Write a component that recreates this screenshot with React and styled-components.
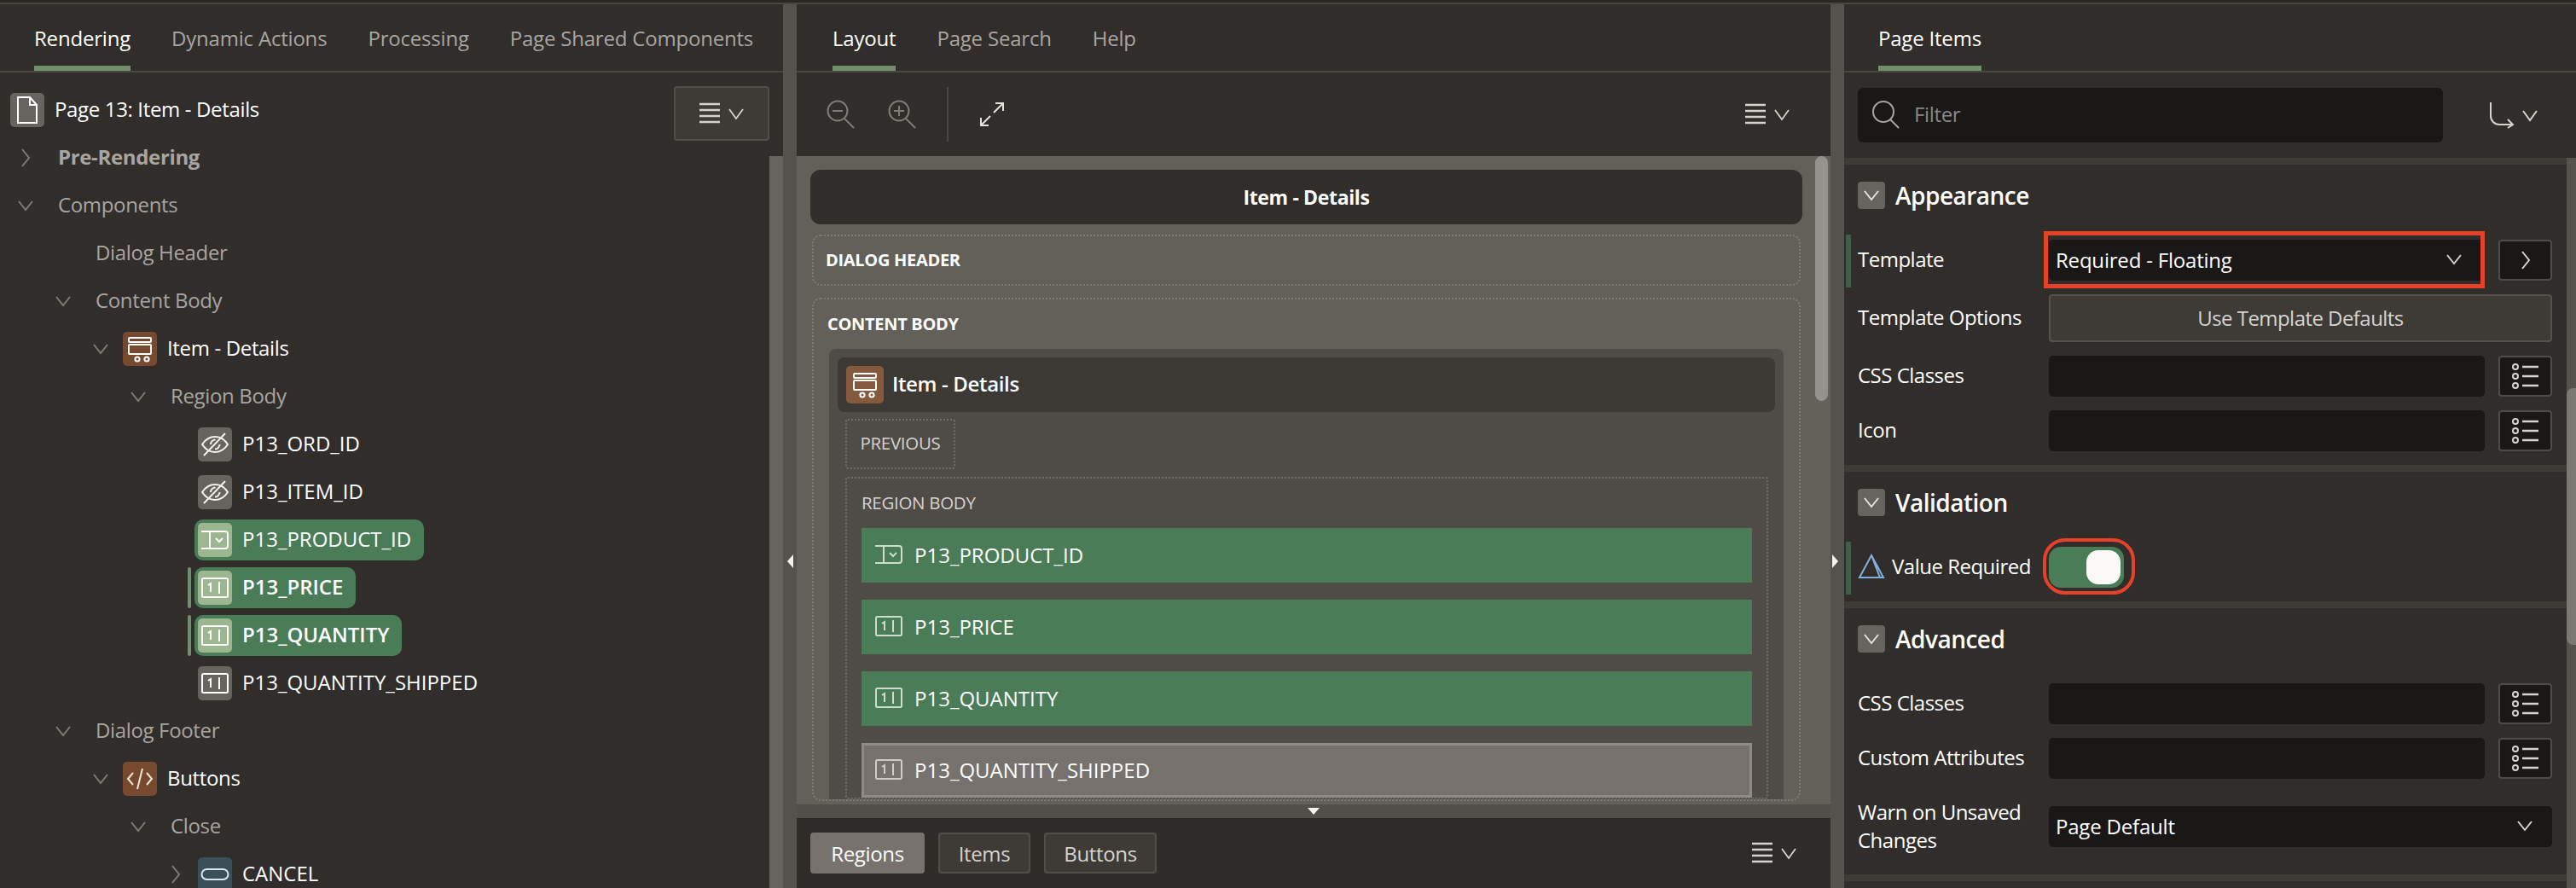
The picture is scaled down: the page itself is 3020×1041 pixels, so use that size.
import React from "react";
import styled, { createGlobalStyle } from "styled-components";

const GlobalStyle = createGlobalStyle`
  html, body { margin: 0; padding: 0; background: #312d2a; }
  * { box-sizing: border-box; }
  body { font-family: "Open Sans", "Noto Sans", sans-serif; font-size: 24px; letter-spacing: -0.35px; color: #fff; }
`;

const Shell = styled.div`
  width: 3020px;
  height: 1041px;
  overflow: hidden;
  display: grid;
  grid-template-columns: 918px 16px 1212px 16px 858px;
  padding-top: 2px;
  border-top: 3px solid #292623;
  background: #312d2a;
  position: relative;
  &::before {
    content: "";
    position: absolute;
    left: 0;
    right: 0;
    top: 0;
    height: 2px;
    background: #494641;
  }
`;
const Panel = styled.section`
  display: flex;
  flex-direction: column;
  min-width: 0;
  height: 1036px;
  overflow: hidden;
  position: relative;
  background: #312d2a;
`;
const Gutter = styled.div`
  background: #55514c;
  height: 1036px;
  position: relative;
`;
const GutterArrow = styled.span`
  position: absolute;
  top: 645px;
  ${(p) => (p.$dir === "left" ? "right: 4px;" : "left: 2px;")}
  width: 0;
  height: 0;
  border-top: 8px solid transparent;
  border-bottom: 8px solid transparent;
  ${(p) => (p.$dir === "left" ? "border-right: 7px solid #f4f2ef;" : "border-left: 7px solid #f4f2ef;")}
`;

const Tabs = styled.div`
  height: 80px;
  flex: none;
  display: flex;
  align-items: stretch;
  gap: ${(p) => p.$gap || 48}px;
  padding-left: ${(p) => p.$pad || 40}px;
  border-bottom: 2px solid #4a4743;
`;
const Tab = styled.div`
  height: 78px;
  padding-top: 22px;
  line-height: 36px;
  letter-spacing: -0.2px;
  color: ${(p) => (p.$active ? "#ffffff" : "#a8a5a0")};
  border-bottom: 6px solid ${(p) => (p.$active ? "#6f9068" : "transparent")};
  white-space: nowrap;
`;

/* left tree */
const TreeWrap = styled.div`
  flex: 1;
  display: flex;
  min-height: 0;
  position: relative;
`;
const Tree = styled.div`
  flex: 1;
  padding-top: 16px;
  overflow: hidden;
`;
const TreeScroll = styled.div`
  position: absolute;
  right: 0;
  top: 98px;
  bottom: 0;
  width: 16px;
  background: #67635e;
`;
const MenuBtn = styled.div`
  position: absolute;
  right: 16px;
  top: 16px;
  width: 112px;
  height: 64px;
  background: #3e3b37;
  border: 2px solid #514e49;
  border-radius: 4px;
  display: flex;
  align-items: center;
  justify-content: center;
`;
const Row = styled.div`
  height: 56px;
  display: flex;
  align-items: center;
  padding-left: ${(p) => 12 + p.$level * 44}px;
  white-space: nowrap;
`;
const ChevronSlot = styled.span`
  width: 36px;
  flex: none;
  display: flex;
  justify-content: center;
`;
const RowText = styled.span`
  font-weight: ${(p) => (p.$bold ? 700 : p.$semi ? 600 : 400)};
  color: ${(p) => (p.$dim ? "#a8a5a0" : "#ffffff")};
  margin-left: ${(p) => p.$ml || 0}px;
  padding-bottom: 3px;
  letter-spacing: ${(p) => (p.$caps ? 0 : "-0.35px")};
`;
const Chip = styled.div`
  display: flex;
  align-items: center;
  gap: 12px;
  height: 48px;
  padding: 4px ${(p) => (p.$selected ? 15 : 4)}px 4px 4px;
  margin-left: ${(p) => (p.$flush ? -4 : 4)}px;
  border-radius: 10px;
  background: ${(p) => (p.$selected ? "#4b7c58" : "transparent")};
  position: relative;
  ${(p) =>
    p.$changed &&
    `&::before {
      content: "";
      position: absolute;
      left: -8px;
      top: 0;
      bottom: 0;
      width: 4px;
      background: #6f9068;
      border-radius: 2px;
    }`}
`;
const Tile = styled.span`
  width: ${(p) => p.$w || 40}px;
  height: ${(p) => p.$w || 40}px;
  flex: none;
  border-radius: 5px;
  background: ${(p) => p.$bg};
  display: flex;
  align-items: center;
  justify-content: center;
`;

/* center */
const Toolbar = styled.div`
  height: 98px;
  flex: none;
  display: flex;
  align-items: center;
  padding: 0 46px 0 34px;
  gap: 36px;
`;
const Divider = styled.span`
  width: 2px;
  height: 64px;
  background: #4a4743;
  margin: 0 0 0 -2px;
`;
const Spacer = styled.span`
  flex: 1;
`;
const Canvas = styled.div`
  flex: 1;
  min-height: 0;
  overflow: hidden;
  position: relative;
  background: #635f59;
  padding: 16px 33px 0 16px;
`;
const CanvasScroll = styled.div`
  position: absolute;
  right: 3px;
  top: 0;
  width: 15px;
  height: 287px;
  background: #95918c;
  border-radius: 8px;
`;
const DialogBar = styled.div`
  height: 64px;
  border-radius: 12px;
  background: #312d2a;
  display: flex;
  align-items: center;
  justify-content: center;
  font-weight: 700;
  font-size: 23px;
`;
const Zone = styled.div`
  margin: ${(p) => p.$mt}px 2px 0;
  height: ${(p) => p.$h || "auto"};
  border: 2px dotted #7f7b75;
  border-radius: 10px;
  padding: ${(p) => (p.$h ? "0 16px" : "0 18px")};
  ${(p) => p.$h && "display: flex; align-items: center;"}
`;
const ZoneLabel = styled.div`
  font-size: 20px;
  font-weight: 700;
  line-height: 58px;
  letter-spacing: -0.3px;
  margin-left: -2px;
  white-space: nowrap;
`;
const Region = styled.div`
  background: #4f4b47;
  border-radius: 8px 8px 0 0;
  padding: 10px 10px 0;
`;
const RegionHead = styled.div`
  height: 64px;
  background: #3d3a36;
  border-radius: 8px;
  display: flex;
  align-items: center;
  gap: 10px;
  padding-left: 10px;
  font-weight: 600;
`;
const SmallBox = styled.div`
  margin: ${(p) => p.$mt}px 8px 0 9px;
  width: ${(p) => p.$w || "auto"};
  height: ${(p) => p.$h || "auto"};
  border: 2px dotted #6f6b66;
  border-radius: 3px;
  padding: ${(p) => p.$pad || 0};
`;
const SmallLabel = styled.div`
  font-size: 20.5px;
  color: #d6d3ce;
  line-height: ${(p) => p.$lh}px;
  padding-bottom: 2px;
  text-align: ${(p) => (p.$center ? "center" : "left")};
  white-space: nowrap;
  letter-spacing: -0.3px;
`;
const Slot = styled.div`
  height: 64px;
  margin-top: ${(p) => p.$mt}px;
  background: ${(p) => (p.$muted ? "#77726d" : "#4b7c58")};
  border: ${(p) => (p.$muted ? "3px solid #8f8b85" : "none")};
  padding: 0 0 2px ${(p) => (p.$muted ? 13 : 16)}px;
  display: flex;
  align-items: center;
  gap: 14px;
  letter-spacing: 0;
`;
const Resizer = styled.div`
  height: 16px;
  flex: none;
  background: #524e49;
  display: flex;
  align-items: center;
  justify-content: center;
`;
const DownArrow = styled.span`
  width: 0;
  height: 0;
  border-left: 7px solid transparent;
  border-right: 7px solid transparent;
  border-top: 8px solid #f4f2ef;
`;
const Footer = styled.div`
  height: 82px;
  flex: none;
  background: #2f2b28;
  display: flex;
  align-items: center;
  gap: 16px;
  padding: 0 38px 0 16px;
`;
const FooterBtn = styled.div`
  height: 48px;
  width: ${(p) => p.$w}px;
  border-radius: 4px;
  display: flex;
  align-items: center;
  justify-content: center;
  background: ${(p) => (p.$active ? "#77726d" : "#3e3b37")};
  border: 2px solid ${(p) => (p.$active ? "#77726d" : "#514e49")};
  color: ${(p) => (p.$active ? "#ffffff" : "#d6d3ce")};
`;

/* right */
const FilterBar = styled.div`
  height: 100px;
  flex: none;
  display: flex;
  align-items: center;
  padding: 0 42px 0 16px;
  justify-content: space-between;
`;
const FilterInput = styled.div`
  width: 686px;
  height: 64px;
  background: #191817;
  border-radius: 6px;
  display: flex;
  align-items: center;
  padding: 0 0 3px 16px;
  gap: 16px;
  color: #8b8883;
`;
const Props = styled.div`
  flex: 1;
  min-height: 0;
  overflow: hidden;
  position: relative;
`;
const PropScrollTrack = styled.div`
  position: absolute;
  right: 0;
  top: 0;
  bottom: 0;
  width: 11px;
  background: #55514c;
`;
const PropScrollThumb = styled.div`
  position: absolute;
  right: 0;
  top: 270px;
  width: 11px;
  height: 301px;
  background: #7b7772;
  border-radius: 8px 0 0 8px;
`;
const Group = styled.div`
  border-top: 8px solid #3e3b37;
  padding: 20px 28px 16px 16px;
`;
const GroupHead = styled.div`
  height: 32px;
  display: flex;
  align-items: center;
  gap: 12px;
  font-size: 28px;
  font-weight: 600;
  letter-spacing: -0.5px;
  margin-bottom: 36px;
  white-space: nowrap;
`;
const Collapse = styled.span`
  width: 32px;
  height: 32px;
  background: #67635e;
  border-radius: 4px;
  display: flex;
  align-items: center;
  justify-content: center;
`;
const Fields = styled.div`
  display: flex;
  flex-direction: column;
  gap: 16px;
`;
const Field = styled.div`
  display: grid;
  grid-template-columns: 224px 1fr;
  align-items: center;
  min-height: ${(p) => p.$h || 48}px;
  position: relative;
  ${(p) =>
    p.$changed &&
    `&::before {
      content: "";
      position: absolute;
      left: -14px;
      top: -6px;
      bottom: -8px;
      width: 6px;
      background: #3f5e48;
    }`}
`;
const Label = styled.label`
  color: #ffffff;
  line-height: 33px;
  letter-spacing: -0.5px;
  padding-bottom: 3px;
  display: flex;
  align-items: center;
  gap: 8px;
  white-space: nowrap;
`;
const Control = styled.div`
  display: flex;
  gap: 16px;
  align-items: stretch;
  position: relative;
`;
const Input = styled.div`
  width: ${(p) => (p.$full ? "590px" : "511px")};
  height: 48px;
  background: #191817;
  border-radius: 5px;
  display: flex;
  align-items: center;
  justify-content: space-between;
  padding: 0 ${(p) => (p.$full ? 22 : 26)}px 2px 8px;
  letter-spacing: -0.2px;
`;
const IconBtn = styled.div`
  width: 63px;
  height: 48px;
  background: #191817;
  border: 2px solid #4f4c47;
  border-radius: 4px;
  display: flex;
  align-items: center;
  justify-content: center;
`;
const WideBtn = styled.div`
  width: 590px;
  height: 56px;
  background: #3e3b37;
  border: 2px solid #55514c;
  border-radius: 4px;
  display: flex;
  align-items: center;
  justify-content: center;
  padding-bottom: 2px;
  color: #d6d3ce;
  letter-spacing: -0.55px;
`;
const Highlight = styled.span`
  position: absolute;
  left: ${(p) => p.$l}px;
  top: ${(p) => p.$t}px;
  width: ${(p) => p.$w}px;
  height: ${(p) => p.$h}px;
  border: ${(p) => p.$b || 5}px solid #e8412a;
  border-radius: ${(p) => p.$r || 0}px;
`;
const Switch = styled.div`
  width: 88px;
  height: 48px;
  background: #4b7c58;
  border-radius: 14px;
  display: flex;
  align-items: center;
  justify-content: flex-end;
  padding-right: 4px;
`;
const Knob = styled.span`
  width: 40px;
  height: 40px;
  background: #fbf9f8;
  border-radius: 14px;
`;

/* icons */
const Chevron = ({ dir = "down", color = "#7f7b76" }) =>
  dir === "down" ? (
    <svg width="20" height="14" viewBox="0 0 20 14" fill="none" stroke={color} strokeWidth="2">
      <path d="M2 2l8 10 8-10" />
    </svg>
  ) : (
    <svg width="14" height="24" viewBox="0 0 14 24" fill="none" stroke={color} strokeWidth="2">
      <path d="M3 2l8 10-8 10" />
    </svg>
  );
const MenuIcon = () => (
  <svg width="56" height="28" viewBox="0 0 56 28" fill="none" stroke="#d6d3ce" strokeWidth="2.4">
    <path d="M2 3h24M2 10h24M2 17h24M2 24h24" />
    <path d="M37 9l8 11 8-11" strokeWidth="1.8" />
  </svg>
);
const EyeOff = () => (
  <svg width="34" height="30" viewBox="0 0 34 30" fill="none" stroke="#f4f2ef" strokeWidth="2">
    <path d="M2 15c4-6 9-9 15-9s11 3 15 9c-4 6-9 9-15 9S6 21 2 15z" />
    <path d="M12 15a5.5 5.5 0 0 1 5.5-5.5M22.5 15a5.5 5.5 0 0 1-5.5 5.5" />
    <path d="M4 28L29 2" />
  </svg>
);
const SelectIcon = ({ color = "#ffffff", size = 32 }) => (
  <svg width={size} height={size * 0.75} viewBox="0 0 32 24" fill="none" stroke={color} strokeWidth="2">
    <path d="M0 2h28a3 3 0 0 1 3 3v14a3 3 0 0 1-3 3H0M10 2v20" />
    <path d="M17 10l4 4 4-4" />
  </svg>
);
const NumberIcon = ({ color = "#ffffff", size = 32 }) => (
  <svg width={size} height={size * 0.75} viewBox="0 0 32 24" fill="none" stroke={color} strokeWidth="2">
    <rect x="1" y="1" width="30" height="22" rx="1.5" />
    <path d="M8 9l3-2v10M21 5v14" />
  </svg>
);
const RegionIcon = ({ size = 40 }) => (
  <svg width={size} height={size} viewBox="0 0 40 40" fill="none" stroke="#fff" strokeWidth="2">
    <rect x="7" y="7" width="26" height="5" rx="1" />
    <rect x="7" y="15" width="26" height="11" rx="1" />
    <circle cx="17" cy="32" r="2.6" />
    <circle cx="28" cy="32" r="2.6" />
  </svg>
);
const CodeIcon = () => (
  <svg width="32" height="28" viewBox="0 0 32 28" fill="none" stroke="#f7e7d8" strokeWidth="2">
    <path d="M8 7l-6 7 6 7M24 7l6 7-6 7M19 2l-6 24" />
  </svg>
);
const ButtonIcon = () => (
  <svg width="34" height="16" viewBox="0 0 34 16" fill="none" stroke="#d9e8ee" strokeWidth="2">
    <rect x="1.5" y="2" width="31" height="12" rx="6" />
  </svg>
);
const PageIcon = () => (
  <svg width="26" height="34" viewBox="0 0 26 34" fill="none" stroke="#fff" strokeWidth="2">
    <path d="M2 2h14l8 9v21H2zM16 2v9h8" />
  </svg>
);
const ZoomIcon = ({ plus }) => (
  <svg width="36" height="34" viewBox="0 0 36 34" fill="none" stroke="#7f7b76" strokeWidth="2">
    <circle cx="14" cy="13" r="11.5" />
    <path d="M22 22l11 11M8 13h12" />
    {plus && <path d="M14 7v12" />}
  </svg>
);
const ExpandIcon = () => (
  <svg width="30" height="30" viewBox="0 0 30 30" fill="none" stroke="#e4e1dc" strokeWidth="2">
    <path d="M19 2h9v9M28 2L17 13M11 28H2v-9M2 28l11-11" />
  </svg>
);
const SearchIcon = () => (
  <svg width="34" height="34" viewBox="0 0 34 34" fill="none" stroke="#a8a5a0" strokeWidth="2">
    <circle cx="14" cy="14" r="12" />
    <path d="M22 23l10 10" />
  </svg>
);
const GoToIcon = () => (
  <svg width="60" height="32" viewBox="0 0 60 32" fill="none" stroke="#d6d3ce" strokeWidth="2">
    <path d="M2 1v16a10 10 0 0 0 10 10h16M22 21l6 6-6 4" />
    <path d="M40 11l8 11 8-11" />
  </svg>
);
const ListIcon = () => (
  <svg width="34" height="30" viewBox="0 0 34 30" fill="none" stroke="#d6d3ce" strokeWidth="2">
    <circle cx="5" cy="4" r="3" />
    <circle cx="5" cy="15" r="3" />
    <circle cx="5" cy="26" r="3" />
    <path d="M13 4h19M13 15h19M13 26h19" strokeWidth="2.4" />
  </svg>
);
const WarnIcon = () => (
  <svg width="32" height="30" viewBox="0 0 32 30" fill="none" stroke="#7fb0e0" strokeWidth="2">
    <path d="M16 2L2 28h28zM16 2l10 26" />
  </svg>
);

const tileFor = {
  hidden: { bg: "#67635e", icon: <EyeOff /> },
  select: { bg: "#67635e", icon: <SelectIcon /> },
  number: { bg: "#67635e", icon: <NumberIcon /> },
  region: { bg: "#774a30", icon: <RegionIcon /> },
  code: { bg: "#774a30", icon: <CodeIcon /> },
  button: { bg: "#3b4f58", icon: <ButtonIcon /> },
};
const selectedBg = "#9cb78f";

const tree = [
  { text: "Pre-Rendering", level: 0, chev: "right", bold: true, dim: true },
  { text: "Components", level: 0, chev: "down", dim: true },
  { text: "Dialog Header", level: 1, dim: true },
  { text: "Content Body", level: 1, chev: "down", dim: true },
  { text: "Item - Details", level: 2, chev: "down", tile: "region" },
  { text: "Region Body", level: 3, chev: "down", dim: true },
  { text: "P13_ORD_ID", level: 4, tile: "hidden", caps: true },
  { text: "P13_ITEM_ID", level: 4, tile: "hidden", caps: true },
  { text: "P13_PRODUCT_ID", level: 4, tile: "select", selected: true, caps: true },
  { text: "P13_PRICE", level: 4, tile: "number", selected: true, changed: true, semi: true, caps: true },
  { text: "P13_QUANTITY", level: 4, tile: "number", selected: true, changed: true, semi: true, caps: true },
  { text: "P13_QUANTITY_SHIPPED", level: 4, tile: "number", caps: true },
  { text: "Dialog Footer", level: 1, chev: "down", dim: true },
  { text: "Buttons", level: 2, chev: "down", tile: "code" },
  { text: "Close", level: 3, chev: "down", dim: true },
  { text: "CANCEL", level: 4, chev: "right", tile: "button", caps: true },
];

const TreeRow = ({ r }) => {
  const t = r.tile && tileFor[r.tile];
  return (
    <Row $level={r.level}>
      <ChevronSlot>{r.chev && <Chevron dir={r.chev} />}</ChevronSlot>
      {t ? (
        <Chip $selected={r.selected} $changed={r.changed}>
          <Tile $bg={r.selected ? selectedBg : t.bg}>{t.icon}</Tile>
          <RowText $semi={r.semi} $caps={r.caps}>
            {r.text}
          </RowText>
        </Chip>
      ) : (
        <RowText $ml={20} $bold={r.bold} $dim={r.dim}>
          {r.text}
        </RowText>
      )}
    </Row>
  );
};

export default function App() {
  return (
    <Shell>
      <GlobalStyle />
      <Panel>
        <Tabs>
          <Tab $active>Rendering</Tab>
          <Tab>Dynamic Actions</Tab>
          <Tab>Processing</Tab>
          <Tab>Page Shared Components</Tab>
        </Tabs>
        <TreeWrap>
          <Tree>
            <Row $level={0}>
              <Chip $flush>
                <Tile $bg="#67635e">
                  <PageIcon />
                </Tile>
                <RowText>Page 13: Item - Details</RowText>
              </Chip>
            </Row>
            {tree.map((r) => (
              <TreeRow key={r.text + r.level} r={r} />
            ))}
          </Tree>
          <MenuBtn>
            <MenuIcon />
          </MenuBtn>
          <TreeScroll />
        </TreeWrap>
      </Panel>
      <Gutter>
        <GutterArrow $dir="left" />
      </Gutter>
      <Panel>
        <Tabs $pad={42} $gap={48}>
          <Tab $active>Layout</Tab>
          <Tab>Page Search</Tab>
          <Tab>Help</Tab>
        </Tabs>
        <Toolbar>
          <ZoomIcon />
          <ZoomIcon plus />
          <Divider />
          <ExpandIcon />
          <Spacer />
          <MenuIcon />
        </Toolbar>
        <Canvas>
          <DialogBar>Item - Details</DialogBar>
          <Zone $mt={12} $h="60px">
            <ZoneLabel>DIALOG HEADER</ZoneLabel>
          </Zone>
          <Zone $mt={14}>
            <ZoneLabel>CONTENT BODY</ZoneLabel>
            <Region>
              <RegionHead>
                <Tile $bg="#85593d" $w={44}>
                  <RegionIcon />
                </Tile>
                <RowText $semi>Item - Details</RowText>
              </RegionHead>
              <SmallBox $mt={8} $w="129px" $h="59px">
                <SmallLabel $lh={53} $center>
                  PREVIOUS
                </SmallLabel>
              </SmallBox>
              <SmallBox $mt={9} $pad="0 17px">
                <SmallLabel $lh={56}>REGION BODY</SmallLabel>
                <Slot $mt={0}>
                  <SelectIcon color="#cfdcc9" />
                  P13_PRODUCT_ID
                </Slot>
                <Slot $mt={20}>
                  <NumberIcon color="#cfdcc9" />
                  P13_PRICE
                </Slot>
                <Slot $mt={20}>
                  <NumberIcon color="#cfdcc9" />
                  P13_QUANTITY
                </Slot>
                <Slot $mt={20} $muted>
                  <NumberIcon color="#cfcbc6" />
                  P13_QUANTITY_SHIPPED
                </Slot>
              </SmallBox>
            </Region>
          </Zone>
          <CanvasScroll />
        </Canvas>
        <Resizer>
          <DownArrow />
        </Resizer>
        <Footer>
          <FooterBtn $w={134} $active>
            Regions
          </FooterBtn>
          <FooterBtn $w={108}>Items</FooterBtn>
          <FooterBtn $w={132}>Buttons</FooterBtn>
          <Spacer />
          <MenuIcon />
        </Footer>
      </Panel>
      <Gutter>
        <GutterArrow $dir="right" />
      </Gutter>
      <Panel>
        <Tabs $pad={40}>
          <Tab $active>Page Items</Tab>
        </Tabs>
        <FilterBar>
          <FilterInput>
            <SearchIcon />
            Filter
          </FilterInput>
          <GoToIcon />
        </FilterBar>
        <Props>
          <Group>
            <GroupHead>
              <Collapse>
                <Chevron color="#e4e1dc" />
              </Collapse>
              Appearance
            </GroupHead>
            <Fields>
              <Field $changed>
                <Label>Template</Label>
                <Control>
                  <Input>
                    Required - Floating
                    <Chevron color="#d6d3ce" />
                  </Input>
                  <IconBtn>
                    <Chevron dir="right" color="#d6d3ce" />
                  </IconBtn>
                  <Highlight $l={-6} $t={-10} $w={517} $h={67} />
                </Control>
              </Field>
              <Field $h={56}>
                <Label>Template Options</Label>
                <Control>
                  <WideBtn>Use Template Defaults</WideBtn>
                </Control>
              </Field>
              <Field>
                <Label>CSS Classes</Label>
                <Control>
                  <Input />
                  <IconBtn>
                    <ListIcon />
                  </IconBtn>
                </Control>
              </Field>
              <Field>
                <Label>Icon</Label>
                <Control>
                  <Input />
                  <IconBtn>
                    <ListIcon />
                  </IconBtn>
                </Control>
              </Field>
            </Fields>
          </Group>
          <Group>
            <GroupHead>
              <Collapse>
                <Chevron color="#e4e1dc" />
              </Collapse>
              Validation
            </GroupHead>
            <Fields>
              <Field $changed>
                <Label>
                  <WarnIcon />
                  Value Required
                </Label>
                <Control>
                  <Switch>
                    <Knob />
                  </Switch>
                  <Highlight $l={-7} $t={-10} $w={108} $h={66} $b={4} $r={26} />
                </Control>
              </Field>
            </Fields>
          </Group>
          <Group>
            <GroupHead>
              <Collapse>
                <Chevron color="#e4e1dc" />
              </Collapse>
              Advanced
            </GroupHead>
            <Fields>
              <Field>
                <Label>CSS Classes</Label>
                <Control>
                  <Input />
                  <IconBtn>
                    <ListIcon />
                  </IconBtn>
                </Control>
              </Field>
              <Field>
                <Label>Custom Attributes</Label>
                <Control>
                  <Input />
                  <IconBtn>
                    <ListIcon />
                  </IconBtn>
                </Control>
              </Field>
              <Field $h={80}>
                <Label>
                  Warn on Unsaved
                  <br />
                  Changes
                </Label>
                <Control>
                  <Input $full>
                    Page Default
                    <Chevron color="#d6d3ce" />
                  </Input>
                </Control>
              </Field>
            </Fields>
          </Group>
          <Group />
          <PropScrollTrack />
          <PropScrollThumb />
        </Props>
      </Panel>
    </Shell>
  );
}
